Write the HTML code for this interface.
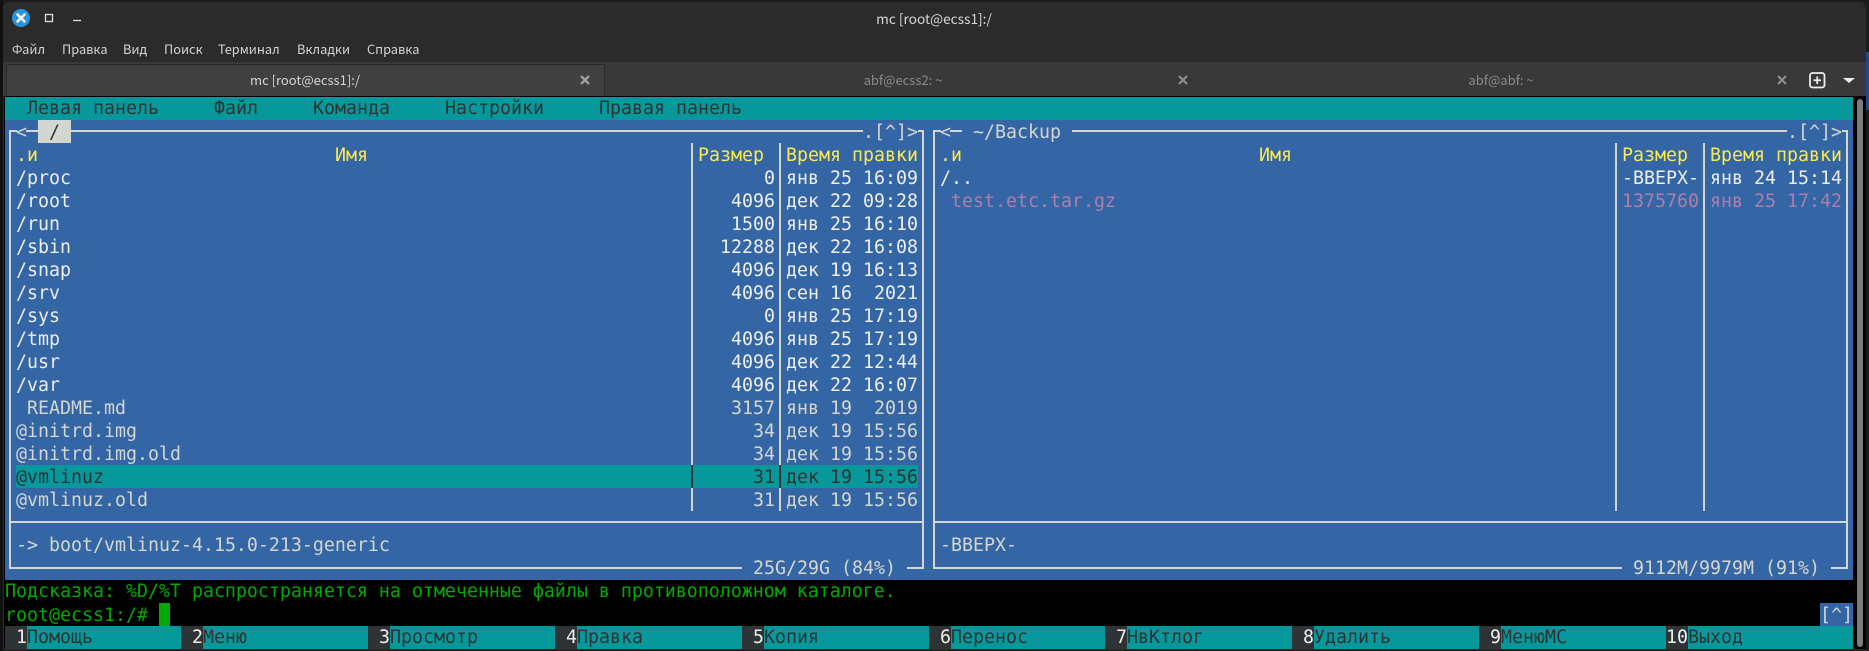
<!DOCTYPE html>
<html><head><meta charset="utf-8"><title>mc [root@ecss1]:/</title>
<style>
html,body{margin:0;padding:0;background:#1c1c1c;width:1869px;height:651px;overflow:hidden}
div{position:absolute}
#win{left:3px;top:2px;width:1863px;height:648px;background:#2b2b2b;border-radius:6px 6px 0 0;overflow:hidden}
.ui{font-family:"Noto Sans CJK SC","Liberation Sans",sans-serif;white-space:pre;line-height:20px;color:#d4d4d4}
.m{top:39px;font-size:12.8px}
.tab{top:70px;font-size:13px;transform:translateX(-50%);color:#8a8a8a}
.mono{font-family:"DejaVu Sans Mono",monospace;font-size:18.27px;line-height:23px;white-space:pre;color:#d3d7cf}
.b{color:#eeeeec}.y{color:#fce94f}.p{color:#ad7fa8}.k{color:#2e3436}
.l{background:#d3d7cf}
.f{background:#2e3436;height:23px;top:626px;width:22px}
.n{top:626px;color:#2e3436}
.d{top:626px;color:#eeeeec;width:22px;text-align:right}
</style></head><body>
<div style="left:0;top:0;width:3px;height:651px;background:#111"></div>
<div style="left:1866px;top:52px;width:3px;height:58px;background:#1c4a8f"></div>
<div id="win"></div>
<!-- title bar -->
<svg style="position:absolute;left:0;top:0" width="100" height="40">
<circle cx="21" cy="18" r="9" fill="#2b93dc"/>
<path d="M17.5 14.500L24.500 21.500M24.500 14.500L17.500 21.500" stroke="#fff" stroke-width="2.400" stroke-linecap="round"/>
<rect x="45.500" y="14.500" width="7" height="7" fill="none" stroke="#e0e0e0" stroke-width="1.300"/>
<path d="M73 20.500H81" stroke="#e0e0e0" stroke-width="1.300"/>
</svg>
<div class="ui" style="left:934px;top:8px;font-size:13.7px;transform:translateX(-50%);color:#d8d8d8">mc [root@ecss1]:/</div>
<div class="ui m" style="left:12px">Файл</div>
<div class="ui m" style="left:62px">Правка</div>
<div class="ui m" style="left:123px">Вид</div>
<div class="ui m" style="left:164px">Поиск</div>
<div class="ui m" style="left:218px">Терминал</div>
<div class="ui m" style="left:297px">Вкладки</div>
<div class="ui m" style="left:367px">Справка</div>
<!-- tabs -->
<div style="left:3px;top:62px;width:1863px;height:34px;background:#393939"></div>
<div style="left:6px;top:64px;width:597px;height:32px;background:#404040;border:1px solid #2a2a2a;border-bottom:0;box-sizing:content-box"></div>
<div style="left:3px;top:96px;width:1863px;height:1px;background:#000"></div>
<div class="ui tab" style="left:305px;color:#d4d4d4">mc [root@ecss1]:/</div>
<div class="ui tab" style="left:903px">abf@ecss2: ~</div>
<div class="ui tab" style="left:1501px">abf@abf: ~</div>
<svg style="position:absolute;left:0;top:60px" width="1869" height="36">
<g stroke="#a6a6a6" stroke-width="2.200" fill="none">
<path d="M581 16L589 24M589 16L581 24"/>
<path d="M1179 16L1187 24M1187 16L1179 24" stroke="#8e8e8e"/>
<path d="M1778 16L1786 24M1786 16L1778 24" stroke="#8e8e8e"/>
</g>
<rect x="1810" y="13" width="14.500" height="14.500" rx="2.500" fill="none" stroke="#eeeeee" stroke-width="1.800"/>
<path d="M1813.500 20.250H1821M1817.250 16.500V24" stroke="#eeeeee" stroke-width="1.800"/>
<path d="M1843 18H1855L1849 23Z" fill="#eeeeee"/>
</svg>
<!-- terminal -->
<div style="left:4px;top:97px;width:1862px;height:552px;background:#000"></div>
<div style="left:1857px;top:99px;width:6px;height:548px;border-radius:3px;background:#7c7c7c"></div>
<div style="left:5px;top:97px;width:1848px;height:23px;background:#06989a"></div>
<div style="left:5px;top:120px;width:1848px;height:460px;background:#3465a4"></div>
<div class="mono k" style="left:27px;top:97px">Левая панель</div>
<div class="mono k" style="left:214px;top:97px">Файл</div>
<div class="mono k" style="left:313px;top:97px">Команда</div>
<div class="mono k" style="left:445px;top:97px">Настройки</div>
<div class="mono k" style="left:599px;top:97px">Правая панель</div>
<!-- frame lines left -->
<div class="l" style="left:9px;top:130px;width:2px;height:438px"></div>
<div class="l" style="left:922px;top:130px;width:2px;height:438px"></div>
<div class="l" style="left:9px;top:130px;width:8px;height:2px"></div>
<div class="l" style="left:26px;top:130px;width:12px;height:2px"></div>
<div class="l" style="left:71px;top:130px;width:792px;height:2px"></div>
<div class="l" style="left:918px;top:130px;width:6px;height:2px"></div>
<div class="l" style="left:9px;top:521px;width:915px;height:2px"></div>
<div class="l" style="left:9px;top:567px;width:733px;height:2px"></div>
<div class="l" style="left:907px;top:567px;width:17px;height:2px"></div>
<!-- frame lines right -->
<div class="l" style="left:933px;top:130px;width:2px;height:438px"></div>
<div class="l" style="left:1846px;top:130px;width:2px;height:438px"></div>
<div class="l" style="left:933px;top:130px;width:8px;height:2px"></div>
<div class="l" style="left:950px;top:130px;width:12px;height:2px"></div>
<div class="l" style="left:1072px;top:130px;width:715px;height:2px"></div>
<div class="l" style="left:1842px;top:130px;width:6px;height:2px"></div>
<div class="l" style="left:933px;top:521px;width:915px;height:2px"></div>
<div class="l" style="left:933px;top:567px;width:689px;height:2px"></div>
<div class="l" style="left:1831px;top:567px;width:17px;height:2px"></div>
<!-- highlight row -->
<div style="left:16px;top:465px;width:902px;height:23px;background:#06989a"></div>
<!-- column separators -->
<div class="l" style="left:691px;top:143px;width:2px;height:368px"></div>
<div class="l" style="left:779px;top:143px;width:2px;height:368px"></div>
<div style="left:691px;top:465px;width:2px;height:23px;background:#2e3436"></div>
<div style="left:779px;top:465px;width:2px;height:23px;background:#2e3436"></div>
<div class="l" style="left:1615px;top:143px;width:2px;height:368px"></div>
<div class="l" style="left:1703px;top:143px;width:2px;height:368px"></div>
<!-- title row -->
<div class="mono" style="left:16px;top:121px">&lt;</div>
<div style="left:38px;top:120px;width:33px;height:23px;background:#d3d7cf"></div>
<div class="mono k" style="left:49px;top:121px">/</div>
<div class="mono" style="left:863px;top:121px">.[^]&gt;</div>
<div class="mono" style="left:940px;top:121px">&lt;</div>
<div class="mono" style="left:973px;top:121px">~/Backup</div>
<div class="mono" style="left:1787px;top:121px">.[^]&gt;</div>
<!-- headers -->
<div class="mono y" style="left:16px;top:144px">.и</div>
<div class="mono y" style="left:335px;top:144px">Имя</div>
<div class="mono y" style="left:698px;top:144px">Размер</div>
<div class="mono y" style="left:786px;top:144px">Время правки</div>
<div class="mono y" style="left:940px;top:144px">.и</div>
<div class="mono y" style="left:1259px;top:144px">Имя</div>
<div class="mono y" style="left:1622px;top:144px">Размер</div>
<div class="mono y" style="left:1710px;top:144px">Время правки</div>
<!-- left files -->
<div class="mono" style="left:16px;top:167px"><span class="b">/proc
/root
/run
/sbin
/snap
/srv
/sys
/tmp
/usr
/var</span>
 README.md
@initrd.img
@initrd.img.old
<span class="k">@vmlinuz</span>
@vmlinuz.old</div>
<div class="mono" style="left:698px;top:167px;width:77px;text-align:right"><span class="b">0
4096
1500
12288
4096
4096
0
4096
4096
4096</span>
3157
34
34
<span class="k">31</span>
31</div>
<div class="mono" style="left:786px;top:167px"><span class="b">янв 25 16:09
дек 22 09:28
янв 25 16:10
дек 22 16:08
дек 19 16:13
сен 16  2021
янв 25 17:19
янв 25 17:19
дек 22 12:44
дек 22 16:07</span>
янв 19  2019
дек 19 15:56
дек 19 15:56
<span class="k">дек 19 15:56</span>
дек 19 15:56</div>
<!-- right files -->
<div class="mono" style="left:940px;top:167px"><span class="b">/..</span>
<span class="p"> test.etc.tar.gz</span></div>
<div class="mono" style="left:1622px;top:167px;width:77px;text-align:right"><span class="b">-ВВЕРХ-</span>
<span class="p">1375760</span></div>
<div class="mono" style="left:1710px;top:167px"><span class="b">янв 24 15:14</span>
<span class="p">янв 25 17:42</span></div>
<!-- mini info -->
<div class="mono" style="left:16px;top:534px">-&gt; boot/vmlinuz-4.15.0-213-generic</div>
<div class="mono" style="left:940px;top:534px">-ВВЕРХ-</div>
<div class="mono" style="left:753px;top:557px">25G/29G (84%)</div>
<div class="mono" style="left:1633px;top:557px">9112M/9979M (91%)</div>
<!-- hint and prompt -->
<div class="mono" style="left:5px;top:580px;color:#00aa00">Подсказка: %D/%T распространяется на отмеченные файлы в противоположном каталоге.</div>
<div class="mono" style="left:5px;top:604px;color:#00aa00">root@ecss1:/#</div>
<div style="left:159px;top:603px;width:11px;height:23px;background:#00aa00"></div>
<div style="left:1820px;top:603px;width:33px;height:23px;background:#3465a4"></div>
<div class="mono" style="left:1820px;top:604px">[^]</div>
<!-- function bar -->
<div style="left:5px;top:626px;width:1848px;height:23px;background:#06989a"></div>
<div class="f" style="left:5px"></div><div class="mono d" style="left:5px">1</div><div class="mono n" style="left:27px">Помощь</div>
<div class="f" style="left:181px"></div><div class="mono d" style="left:181px">2</div><div class="mono n" style="left:203px">Меню</div>
<div class="f" style="left:368px"></div><div class="mono d" style="left:368px">3</div><div class="mono n" style="left:390px">Просмотр</div>
<div class="f" style="left:555px"></div><div class="mono d" style="left:555px">4</div><div class="mono n" style="left:577px">Правка</div>
<div class="f" style="left:742px"></div><div class="mono d" style="left:742px">5</div><div class="mono n" style="left:764px">Копия</div>
<div class="f" style="left:929px"></div><div class="mono d" style="left:929px">6</div><div class="mono n" style="left:951px">Перенос</div>
<div class="f" style="left:1105px"></div><div class="mono d" style="left:1105px">7</div><div class="mono n" style="left:1127px">НвКтлог</div>
<div class="f" style="left:1292px"></div><div class="mono d" style="left:1292px">8</div><div class="mono n" style="left:1314px">Удалить</div>
<div class="f" style="left:1479px"></div><div class="mono d" style="left:1479px">9</div><div class="mono n" style="left:1501px">МенюМС</div>
<div class="f" style="left:1666px"></div><div class="mono d" style="left:1666px">10</div><div class="mono n" style="left:1688px">Выход</div>
</body></html>
